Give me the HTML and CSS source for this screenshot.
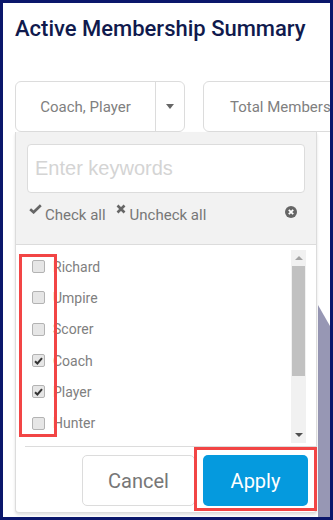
FILE: index.html
```html
<!DOCTYPE html>
<html lang="en">
<head>
    <meta charset="UTF-8">
    <meta name="viewport" content="width=device-width, initial-scale=1.0">
    <title>Active Membership Summary</title>
    <link rel="stylesheet" href="styles.css">
</head>
<body>
    <div class="frame">
        <h1 class="title">Active Membership Summary</h1>

        <div class="filters">
            <div class="select select-roles">
                <span class="select-value">Coach, Player</span>
                <span class="select-toggle"><span class="caret"></span></span>
            </div>
            <div class="select select-type">
                <span class="select-value">Total Membership</span>
            </div>

            <!-- Menu aperto del filtro ruoli -->
            <div class="dropdown">
                <div class="dropdown-head">
                    <input class="search" type="text" placeholder="Enter keywords">
                    <div class="actions">
                        <span class="action">
                            <svg class="icon-check" width="13" height="10" viewBox="0 0 13 10"><path d="M1.2 5.2 L4.6 8.3 L11.8 1.2" fill="none" stroke="#666" stroke-width="2.6"/></svg>
                            Check all
                        </span>
                        <span class="action">
                            <svg class="icon-x" width="10" height="10" viewBox="0 0 10 10"><path d="M1.5 1.5 L8.5 8.5 M8.5 1.5 L1.5 8.5" fill="none" stroke="#666" stroke-width="2.6"/></svg>
                            Uncheck all
                        </span>
                        <svg class="icon-clear" width="12" height="12" viewBox="0 0 12 12"><circle cx="6" cy="6" r="6" fill="#666"/><path d="M3.8 3.8 L8.2 8.2 M8.2 3.8 L3.8 8.2" stroke="#fff" stroke-width="1.8"/></svg>
                    </div>
                </div>

                <div class="options">
                    <ul class="option-list">
                        <li><span class="box"></span>Richard</li>
                        <li><span class="box"></span>Umpire</li>
                        <li><span class="box"></span>Scorer</li>
                        <li><span class="box checked"><svg width="9" height="8" viewBox="0 0 9 8"><path d="M1 4.2 L3.4 6.5 L8 1.2" fill="none" stroke="#333" stroke-width="2"/></svg></span>Coach</li>
                        <li><span class="box checked"><svg width="9" height="8" viewBox="0 0 9 8"><path d="M1 4.2 L3.4 6.5 L8 1.2" fill="none" stroke="#333" stroke-width="2"/></svg></span>Player</li>
                        <li><span class="box"></span>Hunter</li>
                    </ul>
                    <div class="scrollbar">
                        <span class="arrow arrow-up"></span>
                        <span class="thumb"></span>
                        <span class="arrow arrow-down"></span>
                    </div>
                    <div class="highlight highlight-boxes"></div>
                </div>

                <div class="dropdown-foot">
                    <button class="btn cancel">Cancel</button>
                    <button class="btn apply">Apply</button>
                    <div class="highlight highlight-apply"></div>
                </div>
            </div>
        </div>

        <div class="chart">
            <div class="chart-shape"></div>
        </div>
    </div>
</body>
</html>
```

FILE: styles.css
```css
:root {
    --navy: #0b176b;
    --title-color: #101a4d;
    --border-color: #dcdcdc;
    --muted-text: #808080;
    --apply-color: #059ade;
    --mark-color: #f24545;
}

* {
    box-sizing: border-box;
}

body {
    margin: 0;
    font-family: Roboto, Arial, sans-serif;
}

.frame {
    width: 333px;
    height: 520px;
    border: 3px solid var(--navy);
    padding: 0 12px;
    background: white;
    overflow: hidden;
}

.title {
    margin: 0;
    padding-top: 14px;
    font-size: 22px;
    line-height: 24px;
    font-weight: 500;
    color: var(--title-color);
    white-space: nowrap;
}

.filters {
    position: relative;
    display: flex;
    gap: 18px;
    margin-top: 40px;
}

.select {
    flex-shrink: 0;
    display: flex;
    height: 51px;
    border: 1px solid var(--border-color);
    border-radius: 6px;
    font-size: 15px;
    color: var(--muted-text);
}

.select-roles {
    width: 170px;
}

.select-type {
    width: 170px;
    padding-left: 26px;
    align-items: center;
}

.select-roles .select-value {
    flex: 1;
    display: flex;
    align-items: center;
    justify-content: center;
}

.select-toggle {
    width: 29px;
    border-left: 1px solid var(--border-color);
    display: flex;
    align-items: center;
    justify-content: center;
}

.caret {
    width: 0;
    height: 0;
    border-left: 4px solid transparent;
    border-right: 4px solid transparent;
    border-top: 5px solid #666;
}

/* Menu a tendina */
.dropdown {
    position: absolute;
    top: 100%;
    left: 0;
    width: 302px;
    height: 381px;
    border: 1px solid var(--border-color);
    border-top: none;
    border-radius: 0 0 4px 4px;
    background: white;
    box-shadow: 0 2px 3px rgba(0, 0, 0, 0.12);
    z-index: 2;
}

.dropdown-head {
    background: #f2f2f2;
    padding: 12px 11px 0 11px;
    height: 113px;
    border-bottom: 1px solid var(--border-color);
}

.search {
    display: block;
    width: 278px;
    height: 49px;
    border: 1px solid var(--border-color);
    border-radius: 4px;
    padding: 0 7px;
    font-family: "Liberation Sans", Arial, sans-serif;
    font-size: 20px;
    outline: none;
}

.search::placeholder {
    color: #d4d4d4;
}

.actions {
    display: flex;
    align-items: flex-start;
    margin-top: 12px;
    padding-left: 2px;
    font-size: 15px;
    line-height: 20px;
    color: #777;
}

.action {
    display: flex;
    align-items: flex-start;
    margin-right: 10px;
}

.action svg {
    margin-top: -1px;
}

.icon-check {
    margin-right: 3px;
}

.icon-x {
    margin-right: 4px;
}

.icon-clear {
    margin: 1px 8px 0 auto;
}

.options {
    position: relative;
    display: flex;
    height: 201px;
    padding: 6px 10px 3px 16px;
}

.option-list {
    flex: 1;
    list-style: none;
    margin: 0;
    padding: 0;
    overflow: hidden;
}

.option-list li {
    display: flex;
    align-items: center;
    height: 31.3px;
    font-size: 14px;
    color: var(--muted-text);
}

.box {
    width: 13px;
    height: 13px;
    margin-right: 8px;
    border: 1px solid #b3b3b3;
    border-radius: 2px;
    background: #e6e6e6;
    display: flex;
    align-items: center;
    justify-content: center;
}

.scrollbar {
    width: 15px;
    margin-top: -1px;
    background: #f1f1f1;
    display: flex;
    flex-direction: column;
    align-items: center;
}

.arrow {
    width: 0;
    height: 0;
    border-left: 4px solid transparent;
    border-right: 4px solid transparent;
}

.arrow-up {
    margin: 6px 0 6px;
    border-bottom: 4px solid #a3a3a3;
}

.arrow-down {
    margin: auto 0 6px;
    border-top: 4px solid #505050;
}

.thumb {
    width: 13px;
    height: 110px;
    background: #c1c1c1;
}

.dropdown-foot {
    position: relative;
    display: flex;
    justify-content: flex-end;
    gap: 8px;
    margin-left: 9px;
    border-top: 1px solid var(--border-color);
    padding: 8px 8px 0 0;
}

.btn {
    height: 51px;
    border-radius: 5px;
    font-family: Roboto, Arial, sans-serif;
    font-size: 20px;
    cursor: pointer;
}

.cancel {
    width: 113px;
    background: white;
    border: 1px solid var(--border-color);
    color: #777;
}

.apply {
    width: 105px;
    background: var(--apply-color);
    border: none;
    color: white;
}

/* Riquadri rossi di evidenziazione */
.highlight {
    position: absolute;
    border: 3px solid var(--mark-color);
    pointer-events: none;
}

.highlight-boxes {
    left: 3px;
    top: 9px;
    width: 38px;
    height: 183px;
}

.highlight-apply {
    left: 169px;
    top: 0;
    width: 123px;
    height: 64px;
}

.chart {
    display: flex;
    justify-content: flex-end;
    margin: 173px -12px 0 0;
}

.chart-shape {
    width: 12px;
    height: 212px;
    background: #9797b4;
    clip-path: polygon(0 0, 100% 21px, 100% 100%, 0 100%);
}
```
